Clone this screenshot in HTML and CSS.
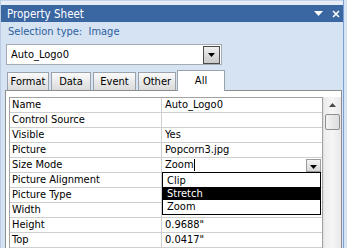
FILE: index.html
```html
<!DOCTYPE html>
<html lang="en">
<head>
<meta charset="UTF-8" />
<title>Property Sheet</title>
<link rel="stylesheet" href="styles.css">
</head>
<body>

<div class="sheet">
  <div class="top-strip"></div>

  <div class="title-bar">
    <span class="title">Property Sheet</span>
    <span class="title-icons">
      <svg width="9" height="5" viewBox="0 0 9 5"><path d="M0 0h9L4.5 5z" fill="#fff"/></svg>
      <svg width="8" height="8" viewBox="0 0 8 8"><path d="M1 1l6 6M7 1L1 7" stroke="#fff" stroke-width="1.6"/></svg>
    </span>
  </div>

  <div class="selection">Selection type:&nbsp; Image</div>

  <div class="combo">
    <span class="combo-text">Auto_Logo0</span>
    <span class="combo-btn">
      <svg width="7" height="4" viewBox="0 0 7 4"><path d="M0 0h7L3.5 4z" fill="#000"/></svg>
    </span>
  </div>

  <div class="tabs">
    <div class="tab tab-format">Format</div>
    <div class="tab tab-data">Data</div>
    <div class="tab tab-event">Event</div>
    <div class="tab tab-other">Other</div>
    <div class="tab tab-all active">All</div>
  </div>

  <div class="pane">
    <div class="grid">
      <div class="row"><div class="name">Name</div><div class="value">Auto_Logo0</div></div>
      <div class="row"><div class="name">Control Source</div><div class="value"></div></div>
      <div class="row"><div class="name">Visible</div><div class="value">Yes</div></div>
      <div class="row"><div class="name">Picture</div><div class="value">Popcorn3.jpg</div></div>
      <div class="row">
        <div class="name">Size Mode</div>
        <div class="value editing">
          <span>Zoom</span><span class="caret"></span>
          <span class="cell-btn">
            <svg width="7" height="4" viewBox="0 0 7 4"><path d="M0 0h7L3.5 4z" fill="#000"/></svg>
          </span>
          <div class="list">
            <div class="item">Clip</div>
            <div class="item selected">Stretch</div>
            <div class="item">Zoom</div>
          </div>
        </div>
      </div>
      <div class="row"><div class="name">Picture Alignment</div><div class="value"></div></div>
      <div class="row"><div class="name">Picture Type</div><div class="value"></div></div>
      <div class="row"><div class="name">Width</div><div class="value"></div></div>
      <div class="row"><div class="name">Height</div><div class="value">0.9688"</div></div>
      <div class="row"><div class="name">Top</div><div class="value">0.0417"</div></div>
    </div>
    <div class="scrollbar">
      <div class="scroll-up">
        <svg width="7" height="4" viewBox="0 0 7 4"><path d="M0 4h7L3.5 0z" fill="#4a4a4a"/></svg>
      </div>
      <div class="thumb"></div>
    </div>
  </div>
</div>

</body>
</html>
```

FILE: styles.css
```css
body {
  margin: 0;
  background-color: #d5e3f3;
  font-family: "DejaVu Sans Condensed", "DejaVu Sans", sans-serif;
  font-stretch: condensed;
  font-size: 11px;
  color: #000;
  overflow: hidden;
}

.sheet {
  width: 342px;
  height: 248px;
  border-left: 1px solid #b9cbe2;
  border-right: 1px solid #7d9fd3;
  background-color: #d5e3f3;
  overflow: hidden;
}

.top-strip {
  height: 4px;
  border-top: 1px solid #c3d2e6;
  background-color: #e6edf6;
}

.title-bar {
  height: 17px;
  background-color: #3a66a2;
  color: #fff;
  display: flex;
  align-items: center;
  justify-content: space-between;
  padding-left: 6px;
  padding-right: 3px;
  font-size: 11.5px;
}

.title-icons {
  display: flex;
  align-items: center;
  gap: 9px;
}

.selection {
  margin-top: 3px;
  padding-left: 7px;
  line-height: 13px;
  color: #30609b;
}

.combo {
  margin: 6px 0 0 5px;
  width: 216px;
  height: 21px;
  box-sizing: border-box;
  border: 1px solid #a4abb4;
  background-color: #fff;
  display: flex;
  align-items: center;
  justify-content: space-between;
  padding-left: 4px;
  padding-right: 1px;
}

.combo-btn {
  width: 17px;
  height: 18px;
  box-sizing: border-box;
  border: 1px solid #4b4b4b;
  background: linear-gradient(#f0f0f0, #c9c9c9);
  display: flex;
  align-items: center;
  justify-content: center;
}

.tabs {
  margin: 5px 0 0 6px;
  height: 20px;
  display: flex;
  align-items: flex-end;
  gap: 2px;
}

.tab {
  height: 18px;
  box-sizing: border-box;
  border: 1px solid #9aa2ab;
  border-bottom: none;
  background: linear-gradient(#fafafa, #dadada);
  text-align: center;
  line-height: 17px;
}

.tab-format { width: 42px; }
.tab-data { width: 40px; }
.tab-event { width: 43px; }
.tab-other { width: 38px; }

.tab.active {
  width: 48px;
  height: 21px;
  margin-left: -1px;
  margin-bottom: -1px;
  background: #fff;
  position: relative;
  z-index: 1;
  line-height: 20px;
}

.pane {
  margin-left: 4px;
  width: 337px;
  height: 200px;
  box-sizing: border-box;
  border: 1px solid #8e8e8e;
  background-color: #fff;
  padding: 6px 0 0 3px;
  display: flex;
  align-items: flex-start;
}

.grid {
  width: 314px;
  box-sizing: border-box;
  border: 1px solid #a2a2a2;
  border-bottom: none;
}

.row {
  display: grid;
  grid-template-columns: 152px 1fr;
  height: 15px;
  box-sizing: border-box;
  border-bottom: 1px solid #cfcfcf;
  line-height: 14px;
}

.name {
  border-right: 1px solid #cfcfcf;
  padding-left: 2px;
  white-space: nowrap;
}

.value {
  padding-left: 3px;
  white-space: nowrap;
}

.editing {
  position: relative;
  display: flex;
  align-items: center;
}

.caret {
  width: 1px;
  height: 12px;
  background-color: #000;
}

.cell-btn {
  margin-left: auto;
  margin-right: 1px;
  width: 15px;
  height: 13px;
  box-sizing: border-box;
  border: 1px solid #9a9a9a;
  background: linear-gradient(#f5f5f5, #d6d6d6);
  display: flex;
  align-items: flex-end;
  justify-content: center;
  padding-bottom: 2px;
}

.list {
  position: absolute;
  left: 0;
  top: 14px;
  width: 159px;
  box-sizing: border-box;
  border: 1px solid #000;
  background-color: #fff;
  padding: 1px 0;
  z-index: 2;
}

.item {
  height: 13px;
  line-height: 13px;
  padding-left: 4px;
}

.item.selected {
  background-color: #000;
  color: #fff;
}

.scrollbar {
  width: 18px;
  height: 200px;
  background: linear-gradient(90deg, #ececec, #f6f6f6 50%, #e8e8e8);
  border-left: 1px solid #e0e0e0;
  box-sizing: border-box;
}

.scroll-up {
  height: 16px;
  display: flex;
  align-items: center;
  justify-content: center;
}

.thumb {
  margin: 1px 0 0 1px;
  width: 15px;
  height: 16px;
  box-sizing: border-box;
  border: 1px solid #8f8f8f;
  border-radius: 2px;
  background: linear-gradient(90deg, #f4f4f4, #dcdcdc);
}
```
